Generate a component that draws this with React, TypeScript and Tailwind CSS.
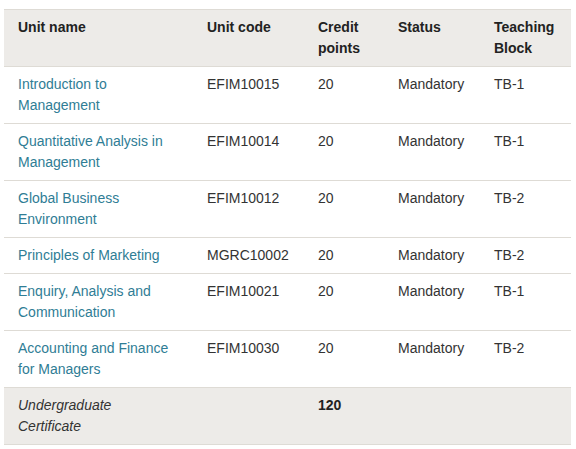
const units = [
  { name: "Introduction to Management", code: "EFIM10015", block: "TB-1" },
  { name: "Quantitative Analysis in Management", code: "EFIM10014", block: "TB-1" },
  { name: "Global Business Environment", code: "EFIM10012", block: "TB-2" },
  { name: "Principles of Marketing", code: "MGRC10002", block: "TB-2" },
  { name: "Enquiry, Analysis and Communication", code: "EFIM10021", block: "TB-1" },
  { name: "Accounting and Finance for Managers", code: "EFIM10030", block: "TB-2" },
]

const cell = "px-[14px] pt-[7px] pb-[7px] align-top text-left"

export default function App() {
  return (
    <div className="bg-white w-[576px] h-[449px] pt-[9px] pl-[4px] font-['Liberation_Sans',Arial,sans-serif] text-[14px] leading-[21px] text-[#333]">
      <table className="w-[567px] table-fixed border-collapse">
        <colgroup>
          <col className="w-[189px]" />
          <col className="w-[111px]" />
          <col className="w-[80px]" />
          <col className="w-[96px]" />
          <col className="w-[91px]" />
        </colgroup>
        <thead>
          <tr className="bg-[#edebe8] border-y border-[#dedbd5] text-[#222] font-bold">
            <th className={cell}>Unit name</th>
            <th className={cell}>Unit code</th>
            <th className={cell}>Credit points</th>
            <th className={cell}>Status</th>
            <th className={cell}>Teaching Block</th>
          </tr>
        </thead>
        <tbody>
          {units.map((u) => (
            <tr key={u.code} className="border-b border-[#dedbd5]">
              <td className={cell}>
                <a href="#" className="text-[#2f7d95]">{u.name}</a>
              </td>
              <td className={cell}>{u.code}</td>
              <td className={cell}>20</td>
              <td className={cell}>Mandatory</td>
              <td className={cell}>{u.block}</td>
            </tr>
          ))}
          <tr className="bg-[#edebe8] border-b border-[#dedbd5]">
            <td className={cell + " italic"}>Undergraduate<br />Certificate</td>
            <td className={cell}></td>
            <td className={cell + " font-bold text-[#222]"}>120</td>
            <td className={cell}></td>
            <td className={cell}></td>
          </tr>
        </tbody>
      </table>
    </div>
  )
}
